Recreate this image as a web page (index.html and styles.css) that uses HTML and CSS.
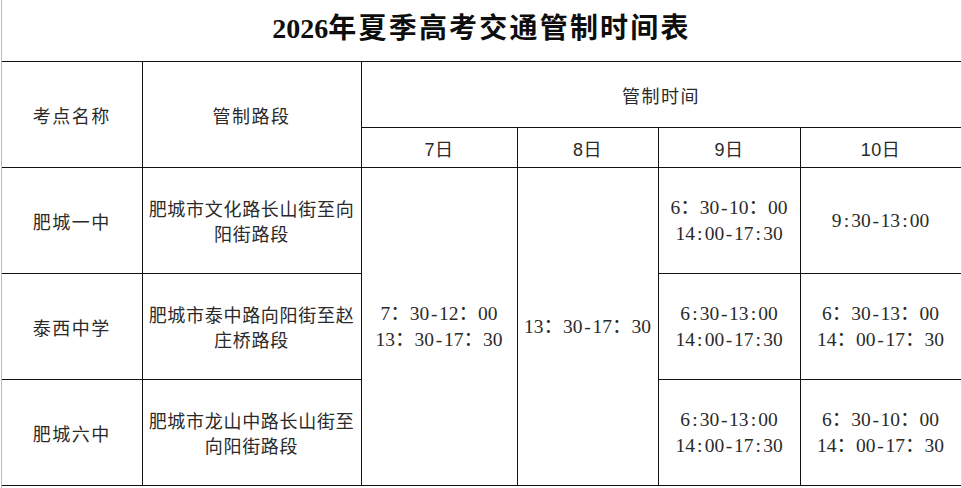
FILE: index.html
```html
<!DOCTYPE html>
<html lang="zh-CN">
<head>
<meta charset="utf-8">
<title>2026年夏季高考交通管制时间表</title>
<link rel="stylesheet" href="styles.css">
</head>
<body>
<div class="page">
  <span class="marker"></span>
  <h1 class="title"><span class="num">2026</span>年夏季高考交通管制时间表</h1>
  <table class="schedule">
    <colgroup>
      <col class="c-name">
      <col class="c-road">
      <col class="c-d7">
      <col class="c-d8">
      <col class="c-d9">
      <col class="c-d10">
    </colgroup>
    <thead>
      <tr class="head1">
        <th rowspan="2" class="first">考点名称</th>
        <th rowspan="2">管制路段</th>
        <th colspan="4">管制时间</th>
      </tr>
      <tr class="head2">
        <th>7日</th>
        <th>8日</th>
        <th>9日</th>
        <th>10日</th>
      </tr>
    </thead>
    <tbody>
      <tr>
        <td class="name first">肥城一中</td>
        <td class="road">肥城市文化路长山街至向<br>阳街路段</td>
        <td rowspan="3" class="time">7：30<span class="sep">-</span>12：00<br>13：30<span class="sep">-</span>17：30</td>
        <td rowspan="3" class="time">13：30<span class="sep">-</span>17：30</td>
        <td class="time">6：30<span class="sep">-</span>10：00<br>14<span class="sep">:</span>00<span class="sep">-</span>17<span class="sep">:</span>30</td>
        <td class="time">9<span class="sep">:</span>30<span class="sep">-</span>13<span class="sep">:</span>00</td>
      </tr>
      <tr>
        <td class="name first">泰西中学</td>
        <td class="road">肥城市泰中路向阳街至赵<br>庄桥路段</td>
        <td class="time">6<span class="sep">:</span>30<span class="sep">-</span>13<span class="sep">:</span>00<br>14<span class="sep">:</span>00<span class="sep">-</span>17<span class="sep">:</span>30</td>
        <td class="time">6：30<span class="sep">-</span>13：00<br>14：00<span class="sep">-</span>17：30</td>
      </tr>
      <tr>
        <td class="name first">肥城六中</td>
        <td class="road">肥城市龙山中路长山街至<br>向阳街路段</td>
        <td class="time">6<span class="sep">:</span>30<span class="sep">-</span>13<span class="sep">:</span>00<br>14<span class="sep">:</span>00<span class="sep">-</span>17<span class="sep">:</span>30</td>
        <td class="time">6：30<span class="sep">-</span>10：00<br>14：00<span class="sep">-</span>17：30</td>
      </tr>
    </tbody>
  </table>
</div>
</body>
</html>
```
FILE: styles.css
```css
html, body {
  margin: 0;
  padding: 0;
  background: #ffffff;
}

.page {
  position: relative;
  width: 959px;
  height: 488px;
  margin-left: 1px;
  border-left: 1px solid #b9bcc6;
  border-right: 1px solid #e2e2e2;
  background: #ffffff;
  overflow: hidden;
}

.marker {
  position: absolute;
  left: -2px;
  top: 380px;
  width: 2px;
  height: 52px;
  background: #f3b878;
}

.title {
  margin: 0;
  height: 61px;
  line-height: 57px;
  text-align: center;
  font-family: "Liberation Serif", "Noto Sans CJK SC", serif;
  font-size: 28px;
  font-weight: 700;
  letter-spacing: 2.2px;
  color: #0e0e0e;
}

.title .num {
  letter-spacing: 0;
}

.schedule {
  table-layout: fixed;
  border-collapse: collapse;
  width: 959px;
  color: #2a2a2a;
}

.c-name { width: 140px; }
.c-road { width: 219px; }
.c-d7 { width: 156px; }
.c-d8 { width: 141px; }
.c-d9 { width: 142px; }
.c-d10 { width: 161px; }

.schedule th,
.schedule td {
  border: 1px solid #111111;
  padding: 0 4px;
  text-align: center;
  vertical-align: middle;
}

.schedule .first {
  border-left: none;
}

.schedule th {
  font-family: "Liberation Sans", "Noto Sans CJK SC", sans-serif;
  font-size: 18px;
  font-weight: 400;
  letter-spacing: 1.5px;
}

.head1 th { height: 65px; }
.head2 th { height: 39px; letter-spacing: 0.5px; }

.schedule tbody tr { height: 106px; }

.name {
  font-family: "Noto Sans CJK SC", sans-serif;
  font-size: 18px;
  letter-spacing: 1.5px;
}

.road {
  font-family: "Noto Sans CJK SC", sans-serif;
  font-size: 18px;
  line-height: 25px;
  letter-spacing: 0.7px;
}

.time {
  font-family: "Liberation Serif", "Noto Sans CJK SC", serif;
  font-size: 19.5px;
  line-height: 25.5px;
  white-space: nowrap;
}

.sep {
  display: inline-block;
  width: 0.5em;
  text-align: center;
}
```
